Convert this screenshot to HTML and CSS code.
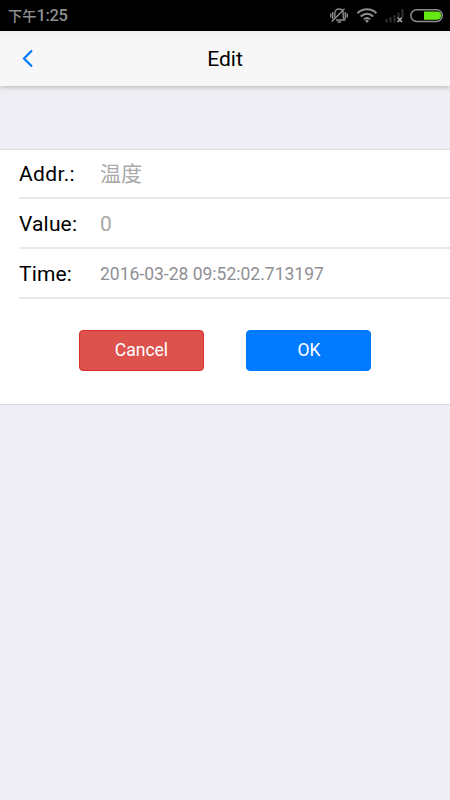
FILE: index.html
```html
<!DOCTYPE html>
<html lang="en">
<head>
<meta charset="utf-8">
<meta name="viewport" content="width=device-width, initial-scale=1">
<title>Edit</title>
<link rel="stylesheet" href="styles.css">
</head>
<body>
<div class="status">
  <span class="clock"><span class="period">下午</span>1:25</span>
  <svg class="status-icons" width="120" height="31" viewBox="0 0 120 31" fill="none" stroke="#8c8c8c">
    <path d="M.8 13.500v4M2.700 12v7M15.300 12v7M17.300 13.500v4" stroke-width="1.400"/>
    <path d="M4.800 17.500v-4C4.800 7.500 13.200 7.500 13.200 13.500v4l1.500 2.500H6M7.500 22h3.500" stroke-width="1.400"/>
    <path d="M1.800 21.500L14.500 8.800" stroke-width="1.500"/>
    <g stroke-width="2.100">
      <path d="M27.500 13.200C33 8 41 8 46.500 13.200"/>
      <path d="M30.700 16.500C34.500 13 39.500 13 43.300 16.500"/>
      <path d="M33.900 19.300C35.800 17.700 38.200 17.700 40.100 19.300"/>
    </g>
    <circle cx="37" cy="21" r="1.600" fill="#8c8c8c" stroke="none"/>
    <path d="M56.500 19v3.500M60.500 17v5.500M64.500 15v7.500M68.500 12.500v5M72.500 9v8" stroke="#2d2d2d" stroke-width="2.200"/>
    <path d="M67.500 17.500l4.500 4.500M72 17.500l-4.500 4.500" stroke="#a8a8a8" stroke-width="1.700"/>
    <rect x="80.800" y="9.800" width="31.500" height="11.600" rx="5.800" stroke-width="1.500"/>
    <path d="M94 11.500h13a4 4 0 0 1 0 8.200H94z" fill="#66e815" stroke="none"/>
  </svg>
</div>
<header class="navbar">
  <svg class="back" width="13" height="20" viewBox="0 0 13 20"><path d="M11 1.500L3 9.500l8 8" fill="none" stroke="#007aff" stroke-width="2.200"/></svg>
  <h1 class="title">Edit</h1>
</header>
<main class="form">
  <div class="row"><span class="label addr">Addr.:</span><span class="hint han">温度</span></div>
  <div class="row"><span class="label">Value:</span><span class="hint">0</span></div>
  <div class="row"><span class="label">Time:</span><span class="time">2016-03-28 09:52:02.713197</span></div>
  <div class="actions">
    <button class="btn cancel">Cancel</button>
    <button class="btn ok">OK</button>
  </div>
</main>
</body>
</html>
```
FILE: styles.css
```css
* { box-sizing: border-box; }
body {
  margin: 0;
  min-height: 800px;
  background: #efeef4;
  font-family: Roboto, "Noto Sans CJK SC", sans-serif;
  font-weight: 400;
  color: #000;
}
.status {
  height: 31px;
  display: flex;
  align-items: center;
  justify-content: space-between;
  padding-left: 8px;
  background: #000;
  color: #8f8f8f;
}
.clock { font-size: 16.500px; font-weight: 500; line-height: 31px; white-space: nowrap; letter-spacing: -.3px; }
.period { font-size: 14.200px; letter-spacing: 0; }
.status-icons { display: block; }
.navbar {
  height: 55px;
  display: grid;
  grid-template-columns: 50px 1fr 50px;
  align-items: center;
  background: linear-gradient(#f0f0f0, #f7f7f7 6px);
  box-shadow: 0 1px 5px rgba(0, 0, 0, .25);
}
.back { margin-left: 21px; }
.title {
  margin: 0;
  padding-top: 1px;
  font-size: 21px;
  font-weight: 400;
  line-height: 55px;
  text-align: center;
}
.form {
  height: 256px;
  margin-top: 63px;
  border-top: 1px solid #dadadd;
  border-bottom: 1px solid #dadadd;
  background: #fff;
}
.row {
  height: 50px;
  margin-left: 19px;
  padding-top: 2px;
  display: flex;
  align-items: center;
  border-bottom: 2px solid #e9e9e9;
}
.row:first-child { height: 49px; padding-top: 0; }
.label { width: 81px; font-size: 21px; letter-spacing: .15px; }
.addr { letter-spacing: .35px; }
.hint { font-size: 21px; color: #a9a9a9; }
.han { padding-bottom: 3px; }
.time { font-size: 17.500px; color: #8f8f94; }
.actions {
  display: flex;
  gap: 42.400px;
  padding: 31px 0 0 79px;
}
.btn {
  width: 125px;
  height: 41px;
  padding: 0 0 1px;
  border: 1px solid;
  border-radius: 4px;
  font: 400 17.500px Roboto, sans-serif;
  color: #fff;
}
.cancel { background: #dd524d; border-color: #dc3028; }
.ok { background: #007aff; border-color: #007aff; }
```
